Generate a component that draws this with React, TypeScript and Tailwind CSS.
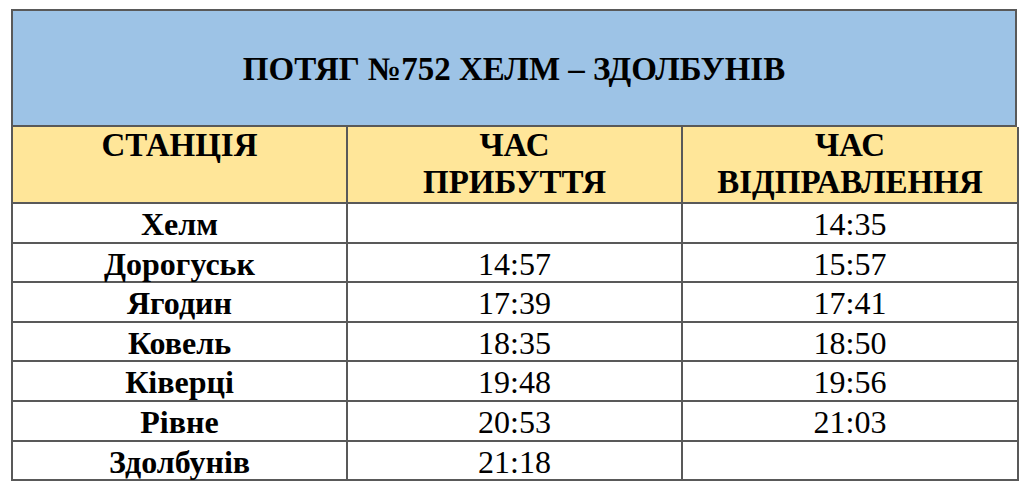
import React from "react";

const rows: [string, string, string][] = [
  ["Хелм", "", "14:35"],
  ["Дорогуськ", "14:57", "15:57"],
  ["Ягодин", "17:39", "17:41"],
  ["Ковель", "18:35", "18:50"],
  ["Ківерці", "19:48", "19:56"],
  ["Рівне", "20:53", "21:03"],
  ["Здолбунів", "21:18", ""],
];

const serif: React.CSSProperties = { fontFamily: '"Liberation Serif", "Times New Roman", Times, serif' };

export default function App() {
  return (
    <div className="w-[1029px] h-[488px] bg-white pl-[11px] pt-[9px] text-black font-serif" style={serif}>
      <div className="w-[1006px] border-l-2 border-t-2 border-[#595959] font-serif" style={serif}>
        <div className="h-[116px] bg-[#9dc3e6] border-r-2 border-b-2 border-[#595959] flex items-center justify-center pt-[2px]">
          <span className="text-[33px] font-bold leading-none font-serif" style={serif}>
            ПОТЯГ №752 ХЕЛМ – ЗДОЛБУНІВ
          </span>
        </div>
        <div className="grid grid-cols-[335px_335px_336px]">
          {[["СТАНЦІЯ"], ["ЧАС", "ПРИБУТТЯ"], ["ЧАС", "ВІДПРАВЛЕННЯ"]].map((h, i) => (
            <div
              key={i}
              className="h-[77px] bg-[#ffe699] border-r-2 border-b-2 border-[#595959] text-center flex flex-col items-center"
            >
              {h.map((line, li) => (
                <span key={li} className="font-serif font-bold text-[33px] leading-[37px]" style={serif}>
                  {line}
                </span>
              ))}
            </div>
          ))}
          {rows.map((r, ri) =>
            r.map((c, ci) => (
              <div
                key={ri + "-" + ci}
                className="h-[39.6px] border-r-2 border-b-2 border-[#595959] text-center pt-[1px]"
              >
                <span
                  className={
                    ci === 0
                      ? "font-serif font-bold text-[32px] leading-[38px]"
                      : "font-serif font-normal text-[32px] leading-[38px]"
                  }
                  style={serif}
                >
                  {c}
                </span>
              </div>
            ))
          )}
        </div>
      </div>
    </div>
  );
}
